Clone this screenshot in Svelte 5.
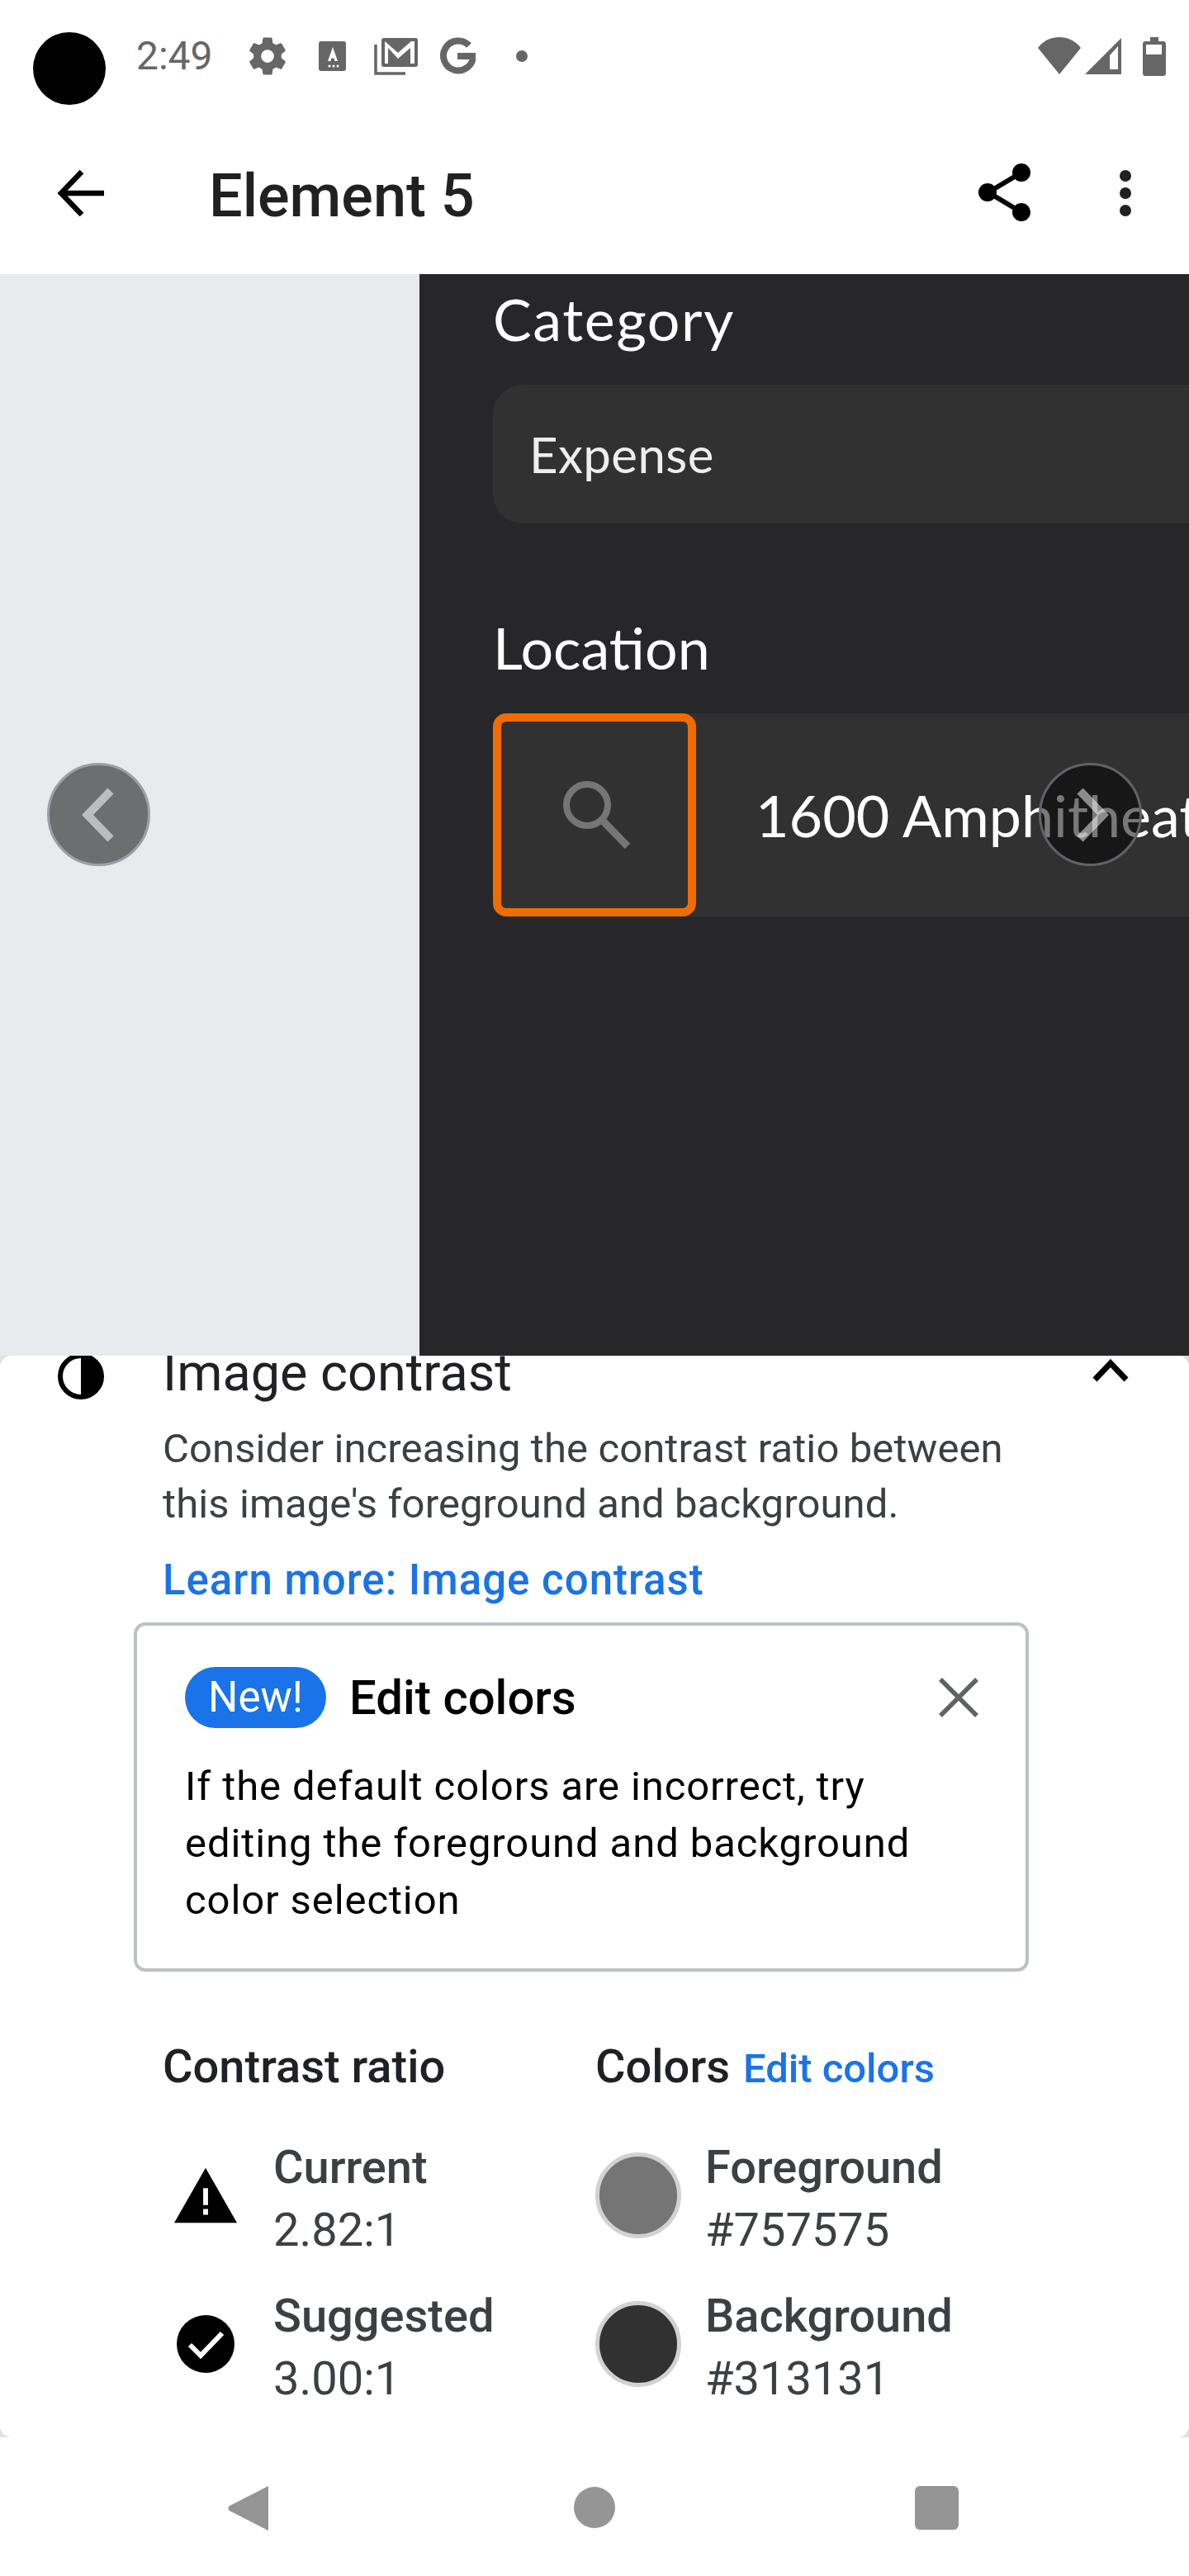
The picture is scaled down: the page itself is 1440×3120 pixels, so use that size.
<script>
  // Accessibility scanner result screen
  const ratios = [
    { label: "Current", value: "2.82:1", icon: "warn" },
    { label: "Suggested", value: "3.00:1", icon: "check" },
  ];
  const colors = [
    { label: "Foreground", hex: "#757575" },
    { label: "Background", hex: "#313131" },
  ];
</script>

<div class="phone">
  <div class="status">
    <div class="camera"></div>
    <span class="time">2:49</span>
    <svg class="s-gear" width="54" height="54" viewBox="0 0 24 24"><path fill="#666" d="M19.4 13c.04-.32.07-.66.07-1s-.03-.68-.07-1l2.1-1.65c.2-.15.25-.42.12-.64l-2-3.46c-.12-.22-.39-.3-.61-.22l-2.49 1c-.52-.4-1.08-.73-1.69-.98l-.38-2.65A.49.49 0 0 0 14 2h-4c-.25 0-.46.18-.49.42l-.38 2.65c-.61.25-1.17.59-1.69.98l-2.49-1c-.23-.09-.49 0-.61.22l-2 3.46c-.13.22-.07.49.12.64L4.56 11c-.04.32-.07.66-.07 1s.03.68.07 1l-2.1 1.65c-.2.15-.25.42-.12.64l2 3.46c.12.22.39.3.61.22l2.49-1c.52.4 1.08.73 1.69.98l.38 2.65c.03.24.24.42.49.42h4c.25 0 .46-.18.49-.42l.38-2.65c.61-.25 1.17-.59 1.69-.98l2.49 1c.23.09.49 0 .61-.22l2-3.46c.12-.22.07-.49-.12-.64L19.4 13zM12 15.5a3.5 3.5 0 1 1 0-7 3.5 3.5 0 0 1 0 7z" /></svg>
    <svg class="s-a" width="34" height="37" viewBox="0 0 34 37">
      <rect width="33" height="36" rx="3" fill="#666" />
      <path d="M17 7l-6 17h3.500l1-3.500h3l1 3.500H23z" fill="#fff" />
      <circle cx="13" cy="30" r="1.500" fill="#fff" /><circle cx="18" cy="30" r="1.500" fill="#fff" /><circle cx="23" cy="30" r="1.500" fill="#fff" />
    </svg>
    <svg class="s-mail" width="54" height="46" viewBox="0 0 54 46">
      <path d="M2 9v35h36" fill="none" stroke="#666" stroke-width="3.500" />
      <rect x="9" y="1" width="44" height="35" rx="3" fill="#666" />
      <path d="M13 32V5l16 14L45 5h4v27h-5V13L29 26 17 13v19z" fill="#fff" />
    </svg>
    <svg class="s-g" width="46" height="46" viewBox="0 0 46 46"><path d="M38 10a18 18 0 1 0 5 13H24" fill="none" stroke="#666" stroke-width="8" /></svg>
    <div class="s-dot"></div>
    <div class="grow"></div>
    <svg width="54" height="46" viewBox="0 0 54 46"><path d="M27 45L1 13C8 4 17 0 27 0s19 4 26 13z" fill="#666" /></svg>
    <svg class="s-sig" width="46" height="46" viewBox="0 0 46 46"><path d="M45 1v44H1z" fill="#666" /><path d="M31 22l10-11v28H31z" fill="#fff" /></svg>
    <svg class="s-bat" width="28" height="47" viewBox="0 0 28 47"><path d="M9 0h10v5h6c1.500 0 3 1 3 3v36c0 2-1.500 3-3 3H3c-1.500 0-3-1-3-3V8c0-2 1.500-3 3-3h6z" fill="#666" /><rect x="4" y="9" width="19" height="12" fill="#fff" /></svg>
  </div>

  <header class="toolbar">
    <svg class="back" width="60" height="60" viewBox="0 0 60 60"><path d="M58 30H6M31 4L6 30l25 26" fill="none" stroke="#000" stroke-width="6.500" /></svg>
    <h1>Element 5</h1>
    <svg class="share" width="64" height="72" viewBox="0 0 64 72">
      <path d="M53 11L13 35l40 24" fill="none" stroke="#000" stroke-width="6" />
      <circle cx="53" cy="11" r="11" /><circle cx="12" cy="35" r="11" /><circle cx="53" cy="59" r="11" />
    </svg>
    <svg class="kebab" width="14" height="56" viewBox="0 0 14 56" fill="#212121">
      <circle cx="7" cy="7" r="7" /><circle cx="7" cy="28" r="7" /><circle cx="7" cy="49" r="7" />
    </svg>
  </header>

  <section class="viewer">
    <div class="pane-left"></div>
    <div class="pane-dark">
      <div class="lbl lbl-cat">Category</div>
      <div class="field">Expense</div>
      <div class="lbl lbl-loc">Location</div>
      <div class="loc">
        <div class="loc-hit">
          <svg width="82" height="82" viewBox="0 0 82 82"><circle cx="29" cy="29" r="25" fill="none" stroke="#757575" stroke-width="8" /><path d="M48 48l30 31" stroke="#757575" stroke-width="9" /></svg>
        </div>
        <span class="addr">1600 Amphitheatre</span>
      </div>
    </div>
    <button class="navbtn prev" aria-label="Previous">
      <svg width="50" height="74" viewBox="0 0 50 74"><path d="M39 8L11 37l28 29" fill="none" stroke="#bdbdbd" stroke-width="10" /></svg>
    </button>
    <button class="navbtn next" aria-label="Next">
      <svg width="50" height="74" viewBox="0 0 50 74"><path d="M12 8l28 29-28 29" fill="none" stroke="rgba(255,255,255,.5)" stroke-width="10" /></svg>
    </button>
  </section>

  <section class="sheet">
    <div class="sheet-scroll">
      <div class="head">
        <svg class="half" width="56" height="56" viewBox="0 0 56 56"><circle cx="28" cy="28" r="25" fill="#fff" stroke="#000" stroke-width="6" /><path d="M28 3a25 25 0 0 1 0 50z" /></svg>
        <div class="head-title">Image contrast</div>
        <svg class="caret" width="44" height="28" viewBox="0 0 44 28"><path d="M3 25L22 5l19 20" fill="none" stroke="#000" stroke-width="7" /></svg>
      </div>
      <p class="desc">Consider increasing the contrast ratio between<br />this image's foreground and background.</p>
      <a class="learn" href="#learn">Learn more: Image contrast</a>

      <div class="card">
        <div class="card-top">
          <span class="pill">New!</span>
          <span class="card-title">Edit colors</span>
          <svg class="close" width="50" height="50" viewBox="0 0 50 50"><path d="M3 3l44 44M47 3L3 47" stroke="#5f6368" stroke-width="5.500" /></svg>
        </div>
        <p class="card-body">If the default colors are incorrect, try<br />editing the foreground and background<br />color selection</p>
      </div>

      <div class="metrics">
        <div class="col">
          <div class="col-title">Contrast ratio</div>
          {#each ratios as r}
            <div class="metric">
              <div class="metric-ic">
                {#if r.icon === "warn"}
                  <svg width="76" height="68" viewBox="0 0 78 68"><path d="M39 0l39 68H0z" /><path d="M36 25h6v21h-6zM36 51h6v7h-6z" fill="#fff" /></svg>
                {:else}
                  <svg class="ok" width="70" height="70" viewBox="0 0 70 70"><circle cx="35" cy="35" r="35" /><path d="M16 36l13 13 26-27" fill="none" stroke="#fff" stroke-width="6" /></svg>
                {/if}
              </div>
              <div class="m-text">
                <div class="m-label">{r.label}</div>
                <div class="m-value">{r.value}</div>
              </div>
            </div>
          {/each}
        </div>
        <div class="col">
          <div class="col-title">Colors <a class="edit" href="#edit">Edit colors</a></div>
          {#each colors as c}
            <div class="metric">
              <div class="swatch" style="background: {c.hex}"></div>
              <div class="m-text">
                <div class="m-label">{c.label}</div>
                <div class="m-value">{c.hex}</div>
              </div>
            </div>
          {/each}
        </div>
      </div>
    </div>
  </section>

  <nav class="sysnav">
    <svg width="52" height="58" viewBox="0 0 52 58"><path d="M50 2v54L3 32c-2-1-2-5 0-6z" fill="#959595" /></svg>
    <div class="home"></div>
    <div class="recent"></div>
  </nav>
</div>

<style>
  :global(body) {
    margin: 0;
    background: #fff;
  }
  .phone {
    position: relative;
    width: 1440px;
    height: 3120px;
    overflow: hidden;
    display: flex;
    flex-direction: column;
    font-family: Roboto, "Liberation Sans", sans-serif;
    background: #e0e0e0;
  }
  .status {
    height: 140px;
    flex: none;
    display: flex;
    align-items: flex-start;
    padding: 45px 28px 0 40px;
    box-sizing: border-box;
    background: #fff;
  }
  .camera {
    width: 88px;
    height: 88px;
    margin-top: -6px;
    border-radius: 50%;
    background: #000;
  }
  .time {
    margin-left: 37px;
    font-size: 48px;
    line-height: 46px;
    color: #666;
  }
  .s-gear { margin-left: 39px; margin-top: -4px; }
  .s-a { margin-left: 35px; margin-top: 5px; }
  .s-mail { margin-left: 33px; }
  .s-g { margin-left: 23px; }
  .s-dot {
    width: 14px;
    height: 14px;
    margin: 16px 0 0 49px;
    border-radius: 50%;
    background: #666;
  }
  .grow { flex: 1; }
  .s-sig { margin-left: 3px; }
  .s-bat { margin-left: 25px; }

  .toolbar {
    height: 192px;
    flex: none;
    display: flex;
    align-items: center;
    box-sizing: border-box;
    padding-left: 68px;
    background: #fff;
  }
  .back { margin-top: -4px; }
  h1 {
    margin: 2px 0 0 125px;
    font-size: 72px;
    font-weight: 500;
    color: #212121;
    flex: 1;
  }
  .share { margin-top: -4px; }
  .kebab { margin: -4px 70px 0 108px; }

  .viewer {
    position: relative;
    height: 1310px;
    flex: none;
    display: flex;
  }
  .pane-left {
    width: 508px;
    background: #e8eaed;
  }
  .pane-dark {
    flex: 1;
    overflow: hidden;
    background: #27272a;
    padding-left: 89px;
    font-family: Lato, "Open Sans", sans-serif;
    color: #fff;
  }
  .lbl {
    font-size: 70px;
    line-height: 84px;
  }
  .lbl-cat { margin-top: 12px; letter-spacing: 1.6px; }
  .field {
    width: 1000px;
    height: 168px;
    margin-top: 38px;
    padding-left: 44px;
    box-sizing: border-box;
    border-radius: 36px;
    background: #313131;
    font-size: 60px;
    letter-spacing: 0.4px;
    line-height: 168px;
    color: #eee;
  }
  .lbl-loc { margin-top: 108px; }
  .loc {
    display: flex;
    align-items: center;
    width: 1000px;
    height: 246px;
    margin-top: 38px;
    background: #313131;
    border-radius: 16px 0 0 16px;
    white-space: nowrap;
  }
  .loc-hit {
    flex: none;
    width: 246px;
    height: 246px;
    box-sizing: border-box;
    border: 10px solid #ef6c00;
    border-radius: 16px;
    display: flex;
    align-items: center;
    justify-content: center;
  }
  .loc-hit svg { margin-left: 6px; }
  .addr {
    margin-left: 72px;
    font-size: 70px;
  }
  .navbtn {
    position: absolute;
    top: 592px;
    width: 125px;
    height: 125px;
    padding: 0;
    border-radius: 50%;
    display: flex;
    align-items: center;
    justify-content: center;
  }
  .prev {
    left: 57px;
    background: #6d6e70;
    border: 3px solid #9aa0a6;
  }
  .next {
    left: 1258px;
    background: rgba(0, 0, 0, 0.53);
    border: 3px solid #5f6368;
  }

  .sheet {
    height: 1310px;
    flex: none;
    overflow: hidden;
    background: #fff;
    border-radius: 14px;
    position: relative;
  }
  .sheet-scroll {
    margin-top: -28px;
    padding-left: 197px;
  }
  .head {
    position: relative;
    height: 72px;
    display: flex;
    align-items: center;
  }
  .half {
    position: absolute;
    left: -127px;
    top: 25px;
  }
  .head-title {
    font-size: 63px;
    line-height: 72px;
    color: #202124;
    margin-top: 26px;
  }
  .caret {
    position: absolute;
    left: 1126px;
    top: 32px;
  }
  .desc {
    margin: 35px 0 0;
    font-size: 49px;
    line-height: 67px;
    letter-spacing: 0.1px;
    color: #3c4043;
  }
  .learn {
    display: block;
    margin-top: 25px;
    font-size: 51px;
    line-height: 67px;
    font-weight: 500;
    letter-spacing: 1px;
    color: #1a73e8;
    text-decoration: none;
  }
  .card {
    width: 1084px;
    height: 423px;
    margin: 18px 0 0 -35px;
    box-sizing: border-box;
    border: 4px solid #bdc1c6;
    border-radius: 14px;
    padding: 50px 0 0 58px;
  }
  .card-top {
    display: flex;
    align-items: center;
  }
  .pill {
    width: 171px;
    height: 74px;
    border-radius: 37px;
    background: #1a73e8;
    color: #fff;
    font-size: 51px;
    line-height: 74px;
    text-align: center;
  }
  .card-title {
    margin-left: 28px;
    font-size: 58px;
    font-weight: 500;
    color: #000;
    flex: 1;
  }
  .close { margin-right: 56px; }
  .card-body {
    margin: 36px 0 0;
    font-size: 49px;
    line-height: 69px;
    letter-spacing: 0.9px;
    color: #000;
  }
  .metrics {
    display: grid;
    grid-template-columns: 524px 1fr;
    margin-top: 83px;
  }
  .col-title {
    height: 64px;
    font-size: 56px;
    line-height: 64px;
    font-weight: 500;
    color: #202124;
    margin-bottom: 34px;
  }
  .edit {
    font-size: 49px;
    color: #1a73e8;
    text-decoration: none;
    margin-left: 2px;
  }
  .metric {
    display: flex;
    align-items: center;
    height: 180px;
  }
  .metric-ic {
    width: 145px;
    flex: none;
    margin-left: -11px;
    box-sizing: border-box;
    padding-left: 25px;
    display: flex;
  }
  .ok { margin-left: 3px; }
  .m-text { margin-top: 8px; }
  .swatch {
    width: 104px;
    height: 104px;
    flex: none;
    box-sizing: border-box;
    border: 5px solid #d2d2d2;
    border-radius: 50%;
    margin-right: 29px;
  }
  .m-label {
    font-size: 56px;
    line-height: 76px;
    font-weight: 500;
    color: #3c4043;
  }
  .m-value {
    font-size: 56px;
    line-height: 76px;
    color: #3c4043;
  }

  .sysnav {
    flex: 1;
    background: #fff;
    position: relative;
    display: grid;
    grid-template-columns: 275px 52px 368px 50px 363px 53px 1fr;
    align-items: center;
  }
  .sysnav svg { grid-column: 2; margin-top: 4px; }
  .home {
    grid-column: 4;
    width: 50px;
    height: 50px;
    margin-top: 2px;
    border-radius: 50%;
    background: #959595;
  }
  .recent {
    grid-column: 6;
    width: 53px;
    height: 53px;
    margin-top: 2px;
    border-radius: 6px;
    background: #959595;
  }
</style>
